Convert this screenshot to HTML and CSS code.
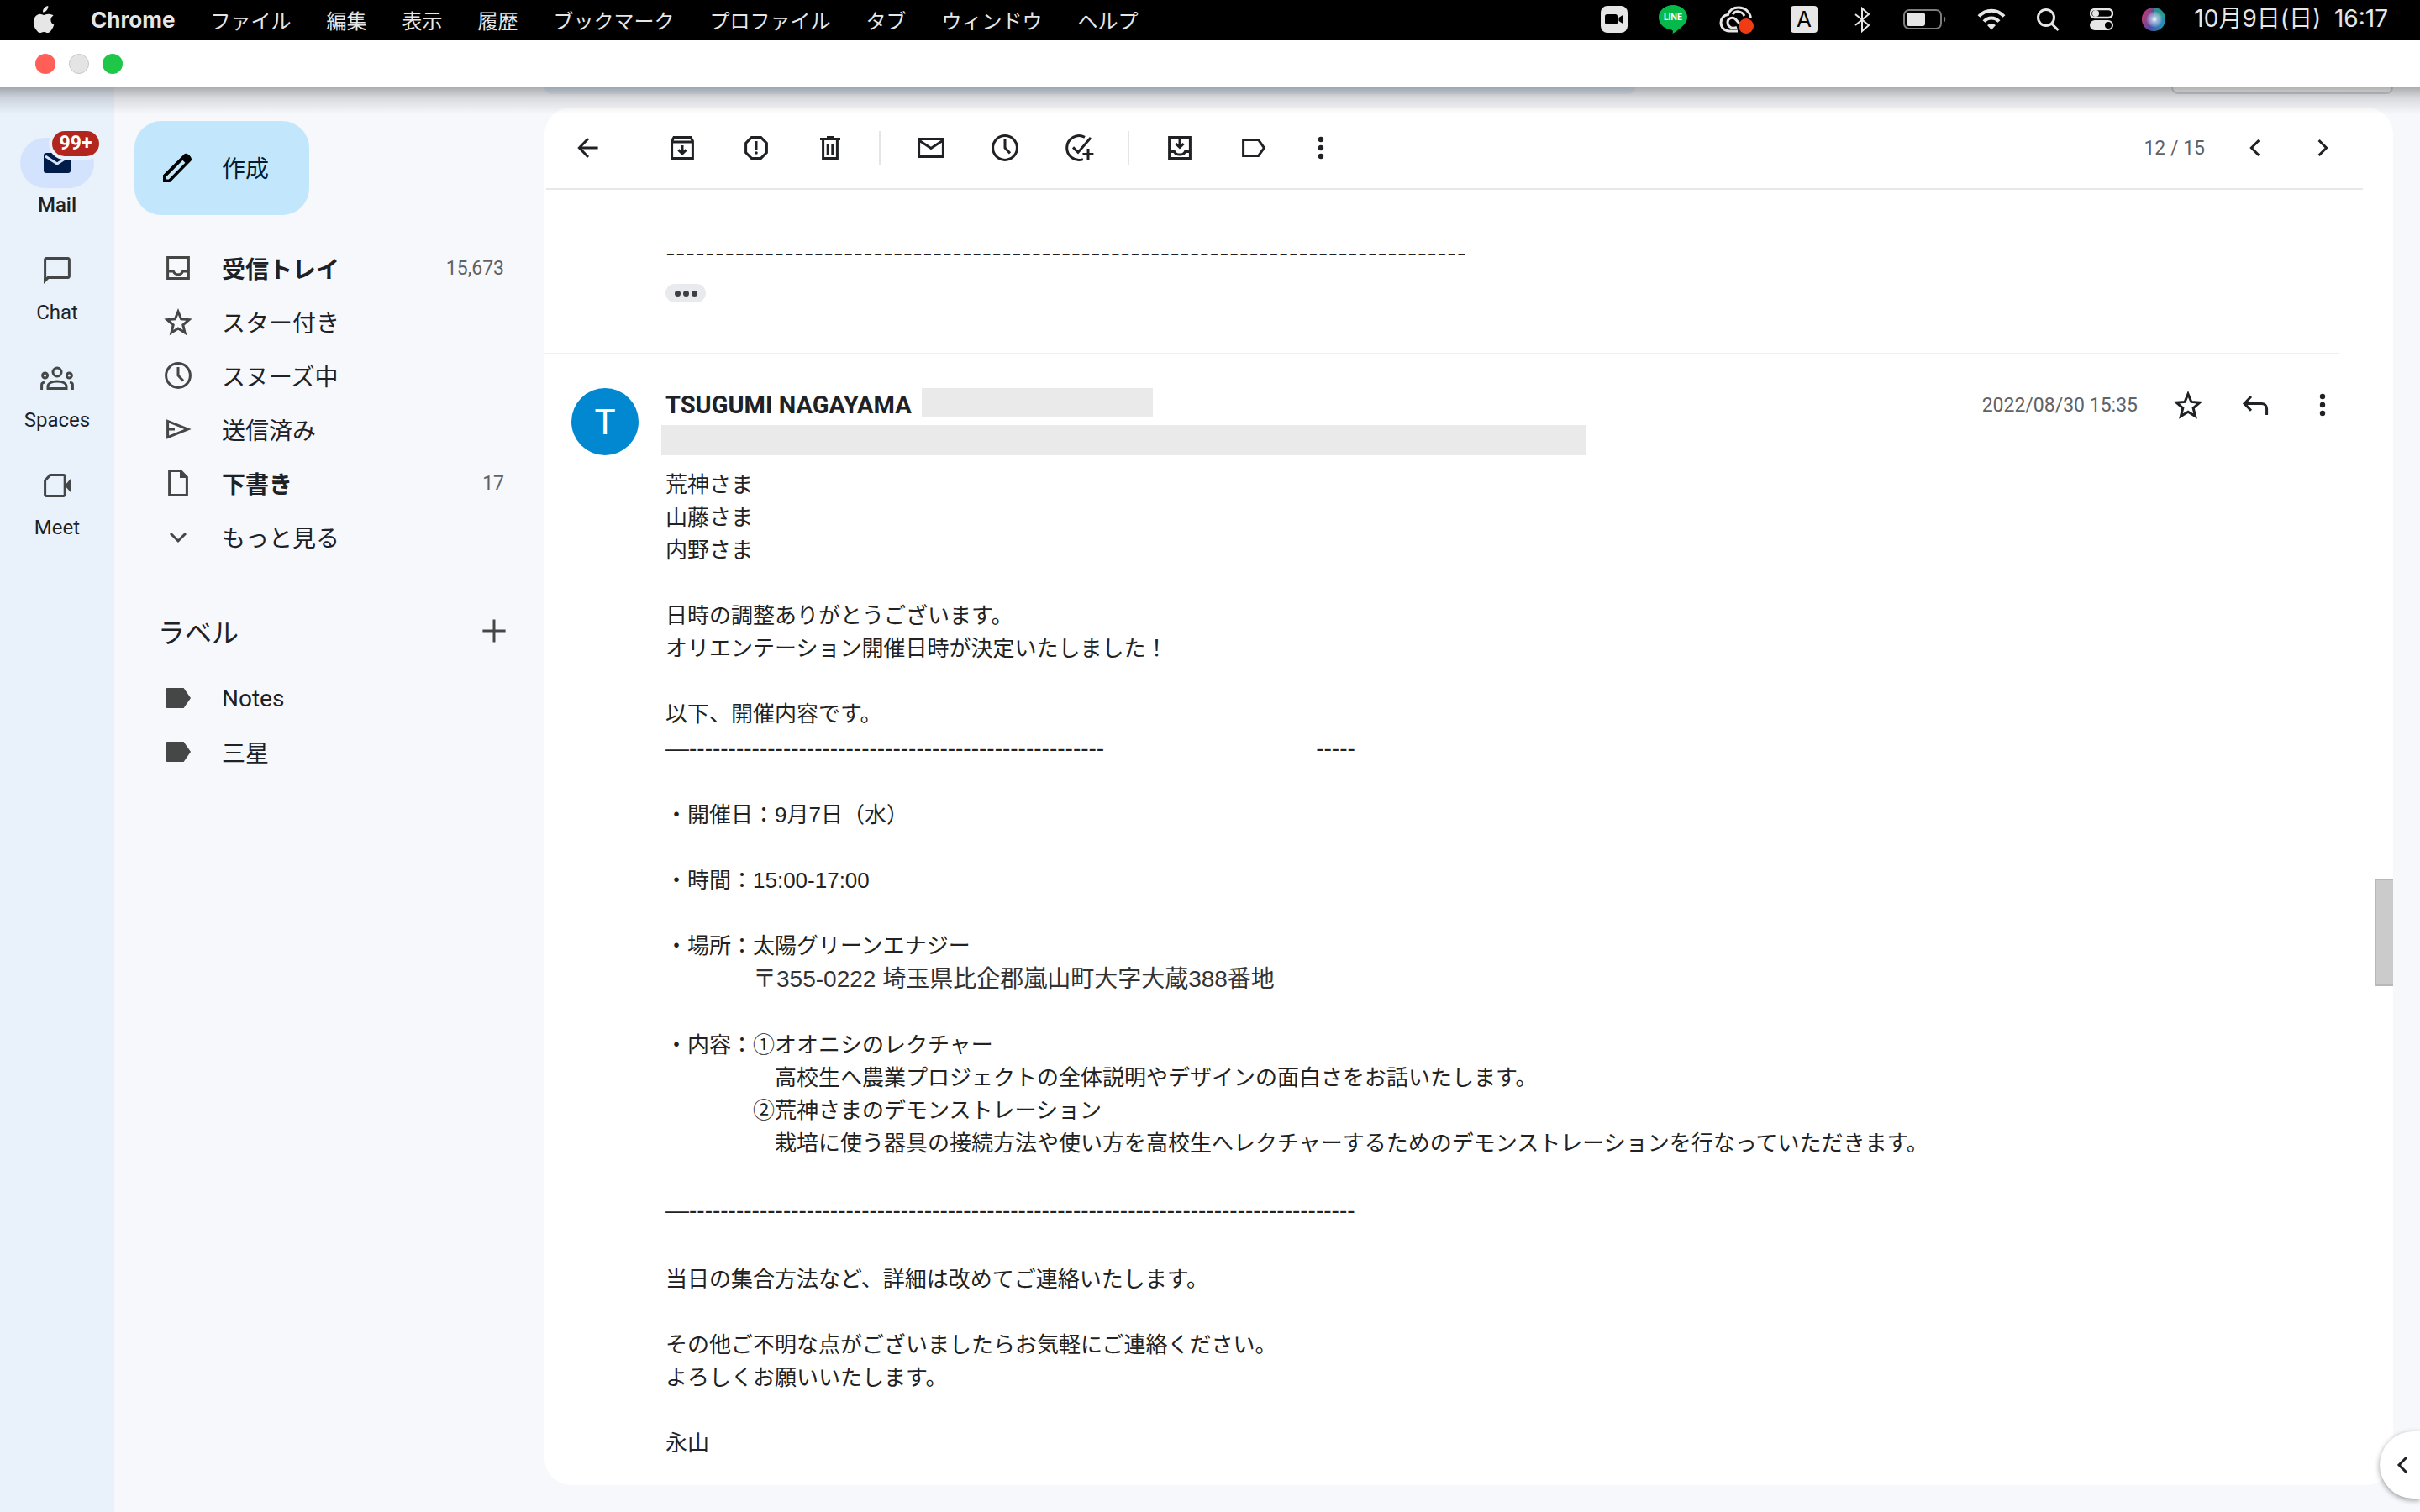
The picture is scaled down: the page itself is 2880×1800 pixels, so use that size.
FILE: index.html
```html
<!DOCTYPE html>
<html lang="ja">
<head>
    <meta charset="UTF-8">
    <meta name="viewport" content="width=device-width, initial-scale=1.0">
    <title>Mail</title>
    <link rel="stylesheet" href="styles.css">
</head>
<body>
    <!-- Menu bar -->
    <header class="menubar">
        <nav class="menus">
            <button aria-label="Apple"><svg width="28" height="34" viewBox="0 0 28 34"><path fill="#e6e6e6" d="M19.300 1c.2 2-.6 3.900-1.700 5.300-1.200 1.400-2.900 2.400-4.600 2.200-.3-1.900.6-3.900 1.700-5.100C15.900 2 17.800 1.100 19.300 1zM25.600 12.400c-2.100 1.300-3.200 3-3.200 5.300 0 2.600 1.400 4.800 3.900 5.800-.7 2.200-1.700 4.300-3.100 6.200-1.200 1.700-2.400 3.300-4.300 3.300s-2.500-1.100-4.600-1.100c-2.200 0-2.900 1.100-4.700 1.200-1.900 0-3.200-1.700-4.500-3.500C2.300 26 .8 20.100 2.900 15.700c1.200-2.900 3.700-4.900 6.600-5 1.900 0 3.400 1.200 4.800 1.200 1.300 0 3.200-1.400 5.600-1.200 2.300.1 4.400.9 5.700 1.700z"/></svg></button>
            <button class="app-name">Chrome</button>
            <button>ファイル</button>
            <button>編集</button>
            <button>表示</button>
            <button>履歴</button>
            <button>ブックマーク</button>
            <button>プロファイル</button>
            <button>タブ</button>
            <button>ウィンドウ</button>
            <button>ヘルプ</button>
        </nav>
        <div class="tray">
            <svg width="32" height="34" viewBox="0 0 32 34"><rect y="1" width="32" height="32" rx="8" fill="#e6e6e6"/><rect x="5" y="11" width="15" height="12" rx="2.500"/><path d="M21.500 15l5.500-3.500v11L21.500 19z"/></svg>
            <svg width="44" height="34" viewBox="0 0 44 34"><path fill="#06b94b" d="M22 0c9.500 0 17 6.500 17 14.500 0 4-2 7-5 10C30.500 28 25 32 21.500 34c.5-2 .8-4-1-4.500C11.500 28.500 5 22.500 5 14.500 5 6.500 12.500 0 22 0z"/><text x="22" y="18" class="line-logo">LINE</text></svg>
            <svg width="44" height="34" viewBox="0 0 44 34"><g fill="none" stroke="#e6e6e6" stroke-width="3"><path d="M23 31H13C7 31 3 26.500 3 21c0-5 3.500-9 8.500-9.500C13.500 5.500 18.500 3 24 3c8 0 13 5 14.500 12"/><path d="M22 26.500c-5 2-11 0-11-6 0-5 6-7 9.500-3.500L25 22M17 11c3.500-5 11-4 14 2"/></g><circle cx="33" cy="25" r="9" fill="#f03c14"/></svg>
            <svg width="52" height="34" viewBox="0 0 52 34"><rect x="10" y="1" width="32" height="32" rx="4" fill="#e6e6e6"/><text x="26" y="26" class="input-source">A</text></svg>
            <svg width="22" height="34" viewBox="0 0 22 34"><path fill="none" stroke="#e6e6e6" stroke-width="2" d="M3 11l16 13-8 7V4l8 7L3 24"/></svg>
            <svg width="62" height="34" viewBox="0 0 62 34"><rect x="7" y="6" width="44" height="22" rx="6" fill="none" stroke="#7d7d7d" stroke-width="2"/><rect x="10" y="9" width="22" height="16" rx="3" fill="#e6e6e6"/><path fill="#7d7d7d" d="M54 13c3 1 3 7 0 8z"/></svg>
            <svg width="34" height="34" viewBox="0 0 34 34"><g fill="none" stroke="#e6e6e6" stroke-width="4"><path d="M2 13.500C10.500 4.500 23.500 4.500 32 13.500"/><path d="M8 19.500c5-5.500 13-5.500 18 0"/></g><path fill="#e6e6e6" d="M17 29.500l-5-5.500c3-2.500 7-2.500 10 0z"/></svg>
            <svg width="36" height="34" viewBox="0 0 36 34"><g fill="none" stroke="#e6e6e6" stroke-width="3"><circle cx="16" cy="15" r="9.500"/><path d="M22.500 22l8 8"/></g></svg>
            <svg width="28" height="34" viewBox="0 0 28 34"><rect x="1" y="5" width="26" height="10" rx="5" fill="none" stroke="#e6e6e6" stroke-width="2.500"/><circle cx="7" cy="10" r="4" fill="#e6e6e6"/><rect y="18" width="28" height="12" rx="6" fill="#e6e6e6"/><circle cx="22" cy="24" r="4"/></svg>
            <svg width="32" height="34" viewBox="0 0 32 34"><defs><radialGradient id="glow"><stop offset="0" stop-color="#fff"/><stop offset=".4" stop-color="#bcd6f0" stop-opacity=".7"/><stop offset="1" stop-color="#fff" stop-opacity="0"/></radialGradient><linearGradient id="siri" x1="0" y1=".3" x2="1" y2=".7"><stop offset="0" stop-color="#c63a72"/><stop offset=".5" stop-color="#4a4ea8"/><stop offset="1" stop-color="#1a9fb8"/></linearGradient></defs><circle cx="16" cy="17" r="14" fill="url(#siri)"/><path fill="#24a886" d="M16 3c8 0 13 5 13.500 12L16 17z" opacity=".7"/><circle cx="17" cy="17" r="10" fill="url(#glow)"/></svg>
            <span class="clock">10月9日(日)&nbsp; 16:17</span>
        </div>
    </header>

    <!-- Window title bar -->
    <div class="titlebar">
        <button class="light close" aria-label="閉じる"></button>
        <button class="light minimize" aria-label="しまう"></button>
        <button class="light zoom" aria-label="拡大"></button>
    </div>

    <div class="app">
        <!-- App rail -->
        <nav class="rail">
            <a href="#mail" class="active">
                <span class="rail-icon">
                    <svg viewBox="0 0 20 20"><path fill="#001d4a" d="M3.500 4h13A1.500 1.500 0 0 1 18 5.500v9a1.500 1.500 0 0 1-1.500 1.500h-13A1.500 1.500 0 0 1 2 14.500v-9A1.500 1.500 0 0 1 3.500 4z"/><path fill="none" stroke="#d3e3fd" stroke-width="1.500" d="M3 6l7 4.500L17 6"/></svg>
                    <span class="badge">99+</span>
                </span>
                Mail
            </a>
            <a href="#chat">
                <span class="rail-icon"><svg viewBox="0 0 20 20"><path class="stroke" d="M2.800 15.500V3.500a.7.7 0 0 1 .7-.7h13a.7.7 0 0 1 .7.7v10a.7.7 0 0 1-.7.7H4.500z"/><path d="M2 14.500h3.500L2 18z"/></svg></span>
                Chat
            </a>
            <a href="#spaces">
                <span class="rail-icon"><svg viewBox="0 0 20 20"><g class="stroke"><circle cx="10" cy="6.500" r="2.500"/><circle cx="2.800" cy="8.500" r="1.500"/><circle cx="17.200" cy="8.500" r="1.500"/><path d="M4.500 16.200V15c0-2 2.500-3 5.500-3s5.500 1 5.500 3v1.200zM.8 17v-3c0-.8.700-1.300 1.700-1.500M19.200 17v-3c0-.8-.7-1.300-1.700-1.500"/></g></svg></span>
                Spaces
            </a>
            <a href="#meet">
                <span class="rail-icon"><svg viewBox="0 0 20 20"><path class="stroke" d="M5.800 3.800h8a.8.8 0 0 1 .8.800v10.800a.8.8 0 0 1-.8.800H3.600a.8.8 0 0 1-.8-.8V7z"/><path d="M14.500 10L18 6v8z"/></svg></span>
                Meet
            </a>
        </nav>

        <!-- Folders -->
        <aside class="sidebar">
            <button class="compose">
                <svg viewBox="0 0 20 20"><path fill-rule="evenodd" d="M1 19v-4.200L13.600 2.200c1.600-1.600 5.700 2.500 4.100 4.100L5.200 19zM3 17.200h1.400L14.200 7.400 12.700 5.900 3 15.600z"/></svg>
                作成
            </button>
            <ul class="folders">
                <li><a href="#inbox" class="unread"><svg viewBox="0 0 20 20"><path class="stroke" d="M3.800 3.800h12.400v12.400H3.800zM3.800 12h3.400c1 2.500 4.600 2.500 5.600 0h3.400"/></svg>受信トレイ<span class="count">15,673</span></a></li>
                <li><a href="#starred"><svg viewBox="0 0 20 20"><path class="stroke" d="M10 4l1.800 4.400 4.700.4-3.600 3.100 1.100 4.600-4-2.500-4 2.500 1.100-4.600-3.600-3.100 4.700-.4z"/></svg>スター付き</a></li>
                <li><a href="#snoozed"><svg viewBox="0 0 20 20"><path class="stroke" d="M10 5v5l3 3.200"/><circle class="stroke" cx="10" cy="10" r="7.200"/></svg>スヌーズ中</a></li>
                <li><a href="#sent"><svg viewBox="0 0 20 20"><path class="stroke" d="M3.800 5.200v9.600L15.800 10zM3.800 10H8"/></svg>送信済み</a></li>
                <li><a href="#drafts" class="unread"><svg viewBox="0 0 20 20"><path class="stroke" d="M5 2.800h6.500L15.200 6.500v10.700H4.800V2.800z"/><path d="M11 2.500V7h4.500z"/></svg>下書き<span class="count">17</span></a></li>
                <li><a href="#more"><svg viewBox="0 0 20 20"><path class="stroke" d="M5.500 8l4.500 4.500L14.500 8"/></svg>もっと見る</a></li>
            </ul>
            <div class="labels-header">
                <h2>ラベル</h2>
                <button aria-label="新しいラベルを作成"><svg viewBox="0 0 20 20"><path class="stroke" d="M10 3.200v13.600M3.200 10h13.600"/></svg></button>
            </div>
            <ul class="folders">
                <li><a href="#notes"><svg viewBox="0 0 20 20"><path d="M3.500 4h9.800l4.200 6-4.200 6H3.500a1 1 0 0 1-1-1V5a1 1 0 0 1 1-1z"/></svg>Notes</a></li>
                <li><a href="#mitsuboshi"><svg viewBox="0 0 20 20"><path d="M3.500 4h9.800l4.200 6-4.200 6H3.500a1 1 0 0 1-1-1V5a1 1 0 0 1 1-1z"/></svg>三星</a></li>
            </ul>
        </aside>

        <!-- Conversation -->
        <div class="content">
            <div class="topbar">
                <div class="search-edge"></div>
                <div class="account-edge"></div>
            </div>
            <main class="panel">
                <div class="toolbar">
                    <button class="back" aria-label="戻る"><svg viewBox="0 0 20 20"><path class="stroke" d="M15.800 10H5M10 4.500L4.700 10l5.300 5.500"/></svg></button>
                    <div class="tool-group">
                        <button aria-label="アーカイブ"><svg viewBox="0 0 20 20"><path class="stroke" d="M3.800 6v10.200h12.400V6L15 3.800H5zM3.800 6.500h12.400M10 8.500v5M7.700 11.200l2.300 2.300 2.300-2.300"/></svg></button>
                        <button aria-label="迷惑メール"><svg viewBox="0 0 20 20"><path class="stroke" d="M7.200 3.800h5.600l3.400 3.400v5.600l-3.400 3.400H7.200l-3.400-3.400V7.200zM10 6v5"/><circle cx="10" cy="13" r=".9"/></svg></button>
                        <button aria-label="削除"><svg viewBox="0 0 20 20"><path class="stroke" d="M4 4.700h12M5.800 5v11.200h8.400V5M8.600 7.500v6.500M11.400 7.500v6.500M8 3.700h4"/></svg></button>
                    </div>
                    <div class="tool-group">
                        <button aria-label="未読にする"><svg viewBox="0 0 20 20"><path class="stroke" d="M2.800 4.800h14.400v10.400H2.800zM2.800 5.500L10 10.200l7.200-4.700"/></svg></button>
                        <button aria-label="スヌーズ"><svg viewBox="0 0 20 20"><path class="stroke" d="M10 5v5l3 3.200"/><circle class="stroke" cx="10" cy="10" r="7.200"/></svg></button>
                        <button aria-label="ToDo に追加"><svg viewBox="0 0 20 20"><path class="stroke" d="M13.500 3.700A7.200 7.200 0 1 0 12.500 16.800M6.500 9.700l3 3L17 4M15.500 10.500v6.500M12.200 13.700h6.500"/></svg></button>
                    </div>
                    <div class="tool-group">
                        <button aria-label="移動"><svg viewBox="0 0 20 20"><path class="stroke" d="M3.800 3.800h12.400v12.400H3.800zM3.800 12.300h3c1 2.300 5.400 2.300 6.400 0h3M10 5v4.500M7.700 7.500L10 9.700l2.300-2.200"/></svg></button>
                        <button aria-label="ラベル"><svg viewBox="0 0 20 20"><path class="stroke" d="M3.800 5.200h9L16.200 10l-3.400 4.800h-9z"/></svg></button>
                    </div>
                    <button class="more" aria-label="その他"><svg viewBox="0 0 20 20"><circle cx="10" cy="5" r="1.600"/><circle cx="10" cy="10" r="1.600"/><circle cx="10" cy="15" r="1.600"/></svg></button>
                    <div class="pager">
                        <span>12 / 15</span>
                        <button aria-label="前"><svg viewBox="0 0 20 20"><path class="stroke" d="M12.200 5.500L7.700 10l4.500 4.500"/></svg></button>
                        <button aria-label="次"><svg viewBox="0 0 20 20"><path class="stroke" d="M7.800 5.500l4.500 4.500-4.500 4.500"/></svg></button>
                    </div>
                </div>

                <article class="message previous">
                    <div class="rule">---------------------------------------------------------------------------------</div>
                    <button class="trimmed" aria-label="省略部分を表示"><i></i><i></i><i></i></button>
                </article>

                <article class="message">
                    <div class="avatar">T</div>
                    <div class="message-main">
                        <div class="message-header">
                            <div class="sender">
                                <div class="sender-row">
                                    <h3>TSUGUMI NAGAYAMA</h3>
                                    <span class="redacted address"></span>
                                </div>
                                <div class="redacted recipients"></div>
                            </div>
                            <div class="message-meta">
                                <time datetime="2022-08-30T15:35">2022/08/30 15:35</time>
                                <button aria-label="スター"><svg viewBox="0 0 20 20"><path class="stroke" d="M10 3.500l1.900 4.700 5 .4-3.800 3.300 1.200 4.900L10 14.100l-4.300 2.700 1.200-4.900-3.800-3.300 5-.4z"/></svg></button>
                                <button aria-label="返信"><svg viewBox="0 0 20 20"><path class="stroke" d="M7.500 5L3.500 9.200l4 4.200M3.800 9.200h10a3 3 0 0 1 3 3V16"/></svg></button>
                                <button aria-label="その他"><svg viewBox="0 0 20 20"><circle cx="10" cy="5" r="1.600"/><circle cx="10" cy="10" r="1.600"/><circle cx="10" cy="15" r="1.600"/></svg></button>
                            </div>
                        </div>
                        <div class="message-body">
                            <div>荒神さま</div>
                            <div>山藤さま</div>
                            <div>内野さま</div>
                            <div><br></div>
                            <div>日時の調整ありがとうございます。</div>
                            <div>オリエンテーション開催日時が決定いたしました！</div>
                            <div><br></div>
                            <div>以下、開催内容です。</div>
                            <div class="large">—-----------------------------------------------------<span class="blank"></span>-----</div>
                            <div><br></div>
                            <div>・開催日：9月7日（水）</div>
                            <div><br></div>
                            <div>・時間：15:00-17:00</div>
                            <div><br></div>
                            <div>・場所：太陽グリーンエナジー</div>
                            <div class="postal"><span>　　　　</span>〒355-0222 埼玉県比企郡嵐山町大字大蔵388番地</div>
                            <div><br></div>
                            <div>・内容：①オオニシのレクチャー</div>
                            <div>　　　　　高校生へ農業プロジェクトの全体説明やデザインの面白さをお話いたします。</div>
                            <div>　　　　②荒神さまのデモンストレーション</div>
                            <div>　　　　　栽培に使う器具の接続方法や使い方を高校生へレクチャーするためのデモンストレーションを行なっていただきます。</div>
                            <div><br></div>
                            <div class="large">—-------------------------------------------------------------------------------------</div>
                            <div class="large"><br></div>
                            <div>当日の集合方法など、詳細は改めてご連絡いたします。</div>
                            <div><br></div>
                            <div>その他ご不明な点がございましたらお気軽にご連絡ください。</div>
                            <div>よろしくお願いいたします。</div>
                            <div><br></div>
                            <div>永山</div>
                        </div>
                    </div>
                </article>
                <div class="scroll-thumb"></div>
            </main>
        </div>
        <button class="side-toggle" aria-label="サイドパネルを表示"><svg viewBox="0 0 20 20"><path class="stroke" d="M12 5.500L7.500 10l4.500 4.500"/></svg></button>
    </div>
</body>
</html>
```

FILE: styles.css
```css
/* General */
* {
    box-sizing: border-box;
}
body {
    margin: 0;
    height: 100vh;
    display: flex;
    flex-direction: column;
    overflow: hidden;
    font-family: Roboto, "Noto Sans CJK JP", sans-serif;
    font-size: 28px;
    color: #202124;
    background: #f6f8fc;
}
button {
    display: flex;
    align-items: center;
    padding: 0;
    border: none;
    background: none;
    color: inherit;
    font: inherit;
    cursor: pointer;
}
a {
    color: inherit;
    text-decoration: none;
}
ul {
    margin: 0;
    padding: 0;
    list-style: none;
}
svg {
    display: block;
    flex: none;
}
.app svg {
    width: 40px;
    height: 40px;
    fill: currentColor;
}
.stroke {
    fill: none;
    stroke: currentColor;
    stroke-width: 1.5;
}

/* Menu bar */
.menubar {
    display: flex;
    justify-content: space-between;
    height: 48px;
    padding: 0 38px 2px;
    background: #000;
    color: #e6e6e6;
    font-family: Inter, "Noto Sans CJK JP", sans-serif;
    font-size: 24px;
}
.menus {
    display: flex;
    gap: 42px;
}
.app-name {
    font-size: 26px;
    font-weight: 700;
}
.tray {
    display: flex;
    align-items: center;
    gap: 32px;
}
.line-logo {
    fill: #fff;
    font-size: 10px;
    font-weight: 700;
    text-anchor: middle;
}
.input-source {
    font-size: 26px;
    text-anchor: middle;
}
.clock {
    padding-bottom: 2px;
    font-size: 28px;
    line-height: 40px;
    white-space: nowrap;
}

/* Title bar */
.titlebar {
    position: relative;
    z-index: 2;
    display: flex;
    align-items: center;
    gap: 16px;
    height: 56px;
    padding: 0 42px;
    background: #fff;
}
.titlebar::after {
    content: "";
    position: absolute;
    top: 100%;
    left: 0;
    right: 0;
    height: 32px;
    background: linear-gradient(rgba(0, 0, 0, 0.3), rgba(0, 0, 0, 0.12) 40%, transparent);
    pointer-events: none;
}
.light {
    width: 24px;
    height: 24px;
    border-radius: 50%;
}
.close {
    background: #ff5f57;
}
.minimize {
    background: #e4e4e4;
    border: 1px solid #c8c8c8;
}
.zoom {
    background: #1fc748;
}

.app {
    flex: 1;
    display: flex;
    min-height: 0;
}

/* App rail */
.rail {
    width: 136px;
    padding-top: 60px;
    display: flex;
    flex-direction: column;
    gap: 28px;
    background: #e9f1fb;
    font-size: 24px;
    line-height: 40px;
    text-align: center;
}
.active {
    font-weight: 500;
}
.rail-icon {
    position: relative;
    display: flex;
    align-items: center;
    justify-content: center;
    width: 88px;
    height: 60px;
    margin: 0 auto;
    border-radius: 30px;
    color: #444746;
}
.active .rail-icon {
    background: #d3e3fd;
}
.badge {
    position: absolute;
    top: -12px;
    left: 34px;
    width: 64px;
    height: 38px;
    border: 4px solid #e9f1fb;
    border-radius: 19px;
    background: #b3261e;
    color: #fff;
    font-size: 23px;
    font-weight: 700;
    line-height: 30px;
}

/* Sidebar */
.sidebar {
    width: 512px;
    padding: 40px 40px 0 24px;
}
.compose {
    gap: 32px;
    width: 208px;
    height: 112px;
    margin-bottom: 32px;
    padding: 0 0 2px 32px;
    border-radius: 32px;
    background: #c2e7fc;
    color: #001d35;
}
.compose svg {
    fill: #000;
}
.folders a {
    display: flex;
    align-items: center;
    gap: 32px;
    height: 64px;
    padding: 0 8px 2px 32px;
}
.folders svg, .labels-header svg {
    color: #444746;
}
.unread {
    font-weight: 700;
}
.count {
    margin-left: auto;
    color: #5f6368;
    font-size: 23px;
    font-weight: 400;
}
.labels-header {
    display: flex;
    align-items: center;
    justify-content: space-between;
    height: 96px;
    margin-top: 32px;
    padding: 0 0 2px 28px;
}
.labels-header h2 {
    margin: 0;
    font-size: 32px;
    font-weight: 400;
}

/* Content */
.content {
    flex: 1;
    display: flex;
    flex-direction: column;
    min-width: 0;
    padding: 0 32px 32px 0;
}
.topbar {
    display: flex;
    justify-content: space-between;
    height: 24px;
}
.search-edge {
    width: 59%;
    height: 8px;
    border-radius: 0 0 16px 16px;
    background: #e4eefb;
}
.account-edge {
    width: 264px;
    height: 8px;
    border: 2px solid #d3d5d9;
    border-top: none;
    border-radius: 0 0 12px 12px;
    background: #fff;
}
.panel {
    position: relative;
    flex: 1;
    border-radius: 32px;
    background: #fff;
}

/* Toolbar */
.toolbar {
    display: flex;
    align-items: center;
    height: 98px;
    margin: 0 36px 0 2px;
    padding: 0 28px 0 30px;
    border-bottom: 2px solid #e8e8e8;
}
.back {
    margin-right: 72px;
}
.tool-group {
    display: flex;
    gap: 48px;
}
.tool-group + .tool-group {
    margin-left: 38px;
    padding-left: 40px;
    border-left: 2px solid #e4e5e7;
}
.more {
    margin-left: 40px;
}
.pager {
    display: flex;
    align-items: center;
    gap: 40px;
    margin-left: auto;
    color: #202124;
    font-size: 23px;
}
.pager span {
    color: #5f6368;
}

/* Messages */
.message {
    display: flex;
    gap: 32px;
    margin-right: 64px;
    padding: 40px 0 0 32px;
}
.previous {
    display: block;
    padding: 56px 0 60px 144px;
    border-bottom: 2px solid #eceff1;
}
.rule {
    font-family: Inter, sans-serif;
    font-size: 26px;
    font-weight: 300;
    line-height: 40px;
    white-space: nowrap;
}
.trimmed {
    justify-content: center;
    gap: 3px;
    width: 48px;
    height: 22px;
    margin-top: 16px;
    border-radius: 11px;
    background: #e8eaed;
}
.trimmed i {
    width: 7px;
    height: 7px;
    border-radius: 50%;
    background: #3c4043;
}
.avatar {
    width: 80px;
    height: 80px;
    border-radius: 50%;
    background: #0288d1;
    color: #fff;
    font-size: 42px;
    line-height: 82px;
    text-align: center;
}
.message-main {
    flex: 1;
    min-width: 0;
}
.message-header {
    display: flex;
    justify-content: space-between;
    align-items: flex-start;
    height: 80px;
}
.sender {
    flex: 1;
}
.sender-row {
    display: flex;
    gap: 12px;
    height: 34px;
    margin-bottom: 10px;
}
.sender h3 {
    margin: 0;
    font-size: 29px;
    font-weight: 700;
    line-height: 40px;
}
.redacted {
    background: #eaeaea;
}
.address {
    width: 275px;
    height: 34px;
}
.recipients {
    width: 1100px;
    height: 36px;
    margin-left: -5px;
}
.message-meta {
    display: flex;
    align-items: center;
    gap: 40px;
    height: 40px;
}
.message-meta time {
    color: #5f6368;
    font-size: 23px;
}
.message-body {
    margin-top: 16px;
    color: #222;
    font-family: "Liberation Sans", "Noto Sans CJK JP", sans-serif;
    font-size: 26px;
    line-height: 39px;
    white-space: nowrap;
}
.message-body .large {
    font-size: 28px;
    line-height: 42px;
}
.message-body .postal {
    color: #333;
    font-size: 28px;
}
.postal span {
    font-size: 26px;
}
.blank {
    display: inline-block;
    width: 252px;
}
.scroll-thumb {
    position: absolute;
    top: 56%;
    right: 0;
    width: 22px;
    height: 128px;
    border: 2px solid #b8b8b8;
    border-right: none;
    background: #cbcbcb;
}
.side-toggle {
    position: absolute;
    right: 0;
    bottom: 16px;
    width: 48px;
    height: 80px;
    padding-left: 8px;
    border-radius: 40px 0 0 40px;
    background: #fff;
    box-shadow: 0 2px 6px rgba(0, 0, 0, 0.4);
}
```
